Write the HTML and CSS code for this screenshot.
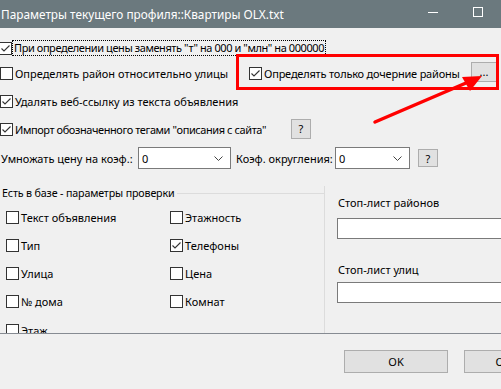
FILE: index.html
```html
<!DOCTYPE html>
<html lang="ru">
<head>
<meta charset="utf-8">
<title>Параметры текущего профиля</title>
<link rel="stylesheet" href="styles.css">
</head>
<body>
<div class="window">
  <div class="titlebar">
    <span class="title">Параметры текущего профиля::Квартиры OLX.txt</span>
    <span class="ctl-min"></span>
    <span class="ctl-max"></span>
  </div>
  <div class="panel">
    <div class="row row1">
      <span class="cb cb-edge checked"><svg viewBox="0 0 11 11"><polyline points="1.5,5.5 4,8 9.5,2.5"/></svg></span>
      <span class="lbl focus tight">При определении цены заменять "т" на 000 и "млн" на 000000</span>
    </div>
    <div class="row row2">
      <div class="cell cell-a">
        <span class="cb"></span>
        <span class="lbl">Определять район относительно улицы</span>
      </div>
      <div class="cell cell-b">
        <span class="cb checked"><svg viewBox="0 0 11 11"><polyline points="1.5,5.5 4,8 9.5,2.5"/></svg></span>
        <span class="lbl semi">Определять только дочерние районы</span>
      </div>
      <span class="btn btn-dots">...</span>
    </div>
    <div class="row row3">
      <span class="cb checked"><svg viewBox="0 0 11 11"><polyline points="1.5,5.5 4,8 9.5,2.5"/></svg></span>
      <span class="lbl">Удалять веб-ссылку из текста объявления</span>
    </div>
    <div class="row row4">
      <div class="cell cell-imp">
        <span class="cb checked"><svg viewBox="0 0 11 11"><polyline points="1.5,5.5 4,8 9.5,2.5"/></svg></span>
        <span class="lbl tight">Импорт обозначенного тегами "описания с сайта"</span>
      </div>
      <span class="btn btn-q">?</span>
    </div>
    <div class="row row5">
      <span class="cell cell-mult">Умножать цену на коэф.:</span>
      <span class="combo combo1"><span>0</span><svg viewBox="0 0 9 5"><polyline points="0.5,0.5 4.5,4.5 8.5,0.5"/></svg></span>
      <span class="cell cell-round">Коэф. округления:</span>
      <span class="combo combo2"><span>0</span><svg viewBox="0 0 9 5"><polyline points="0.5,0.5 4.5,4.5 8.5,0.5"/></svg></span>
      <span class="btn btn-q2">?</span>
    </div>
    <div class="lower">
      <div class="group">
        <div class="group-head"><span class="group-title">Есть в базе - параметры проверки</span><span class="group-line"></span></div>
        <div class="grid">
          <div class="item"><span class="cb"></span><span class="lbl">Текст объявления</span></div>
          <div class="item"><span class="cb"></span><span class="lbl">Этажность</span></div>
          <div class="item"><span class="cb"></span><span class="lbl">Тип</span></div>
          <div class="item"><span class="cb checked"><svg viewBox="0 0 11 11"><polyline points="1.5,5.5 4,8 9.5,2.5"/></svg></span><span class="lbl">Телефоны</span></div>
          <div class="item"><span class="cb"></span><span class="lbl">Улица</span></div>
          <div class="item"><span class="cb"></span><span class="lbl">Цена</span></div>
          <div class="item"><span class="cb"></span><span class="lbl">№ дома</span></div>
          <div class="item"><span class="cb"></span><span class="lbl">Комнат</span></div>
          <div class="item"><span class="cb"></span><span class="lbl">Этаж</span></div>
        </div>
      </div>
      <div class="side">
        <div class="side-lbl">Стоп-лист районов</div>
        <div class="input input1"></div>
        <div class="side-lbl second">Стоп-лист улиц</div>
        <div class="input input2"></div>
      </div>
    </div>
  </div>
  <div class="footer">
    <span class="btn btn-big">OK</span>
    <span class="btn btn-big btn-cancel">Отмена</span>
  </div>
  <div class="redbox"></div>
  <svg class="arrow" viewBox="0 0 501 389" width="501" height="389">
    <line x1="375" y1="122" x2="466" y2="83"/>
    <polygon points="482,76 462,77 470,91"/>
  </svg>
</div>
</body>
</html>
```
FILE: styles.css
```css
* { box-sizing: border-box; }
html, body { margin: 0; padding: 0; }
body {
  width: 501px;
  height: 389px;
  overflow: hidden;
  background: #f0f0f0;
  font-family: "Noto Sans", "Liberation Sans", sans-serif;
  font-size: 11px;
  color: #000;
}
.window {
  position: relative;
  width: 501px;
  height: 389px;
  overflow: hidden;
  background: #f0f0f0;
}
.titlebar {
  height: 28px;
  background: #6b797e;
  color: #fff;
  display: flex;
  align-items: center;
  padding-left: 1px;
}
.title { flex: 1; font-size: 11.8px; white-space: nowrap; padding-bottom: 1px; }
.ctl-min {
  width: 10px; height: 1px; background: #fff;
  margin-right: 35px; margin-top: -4px;
}
.ctl-max {
  width: 10px; height: 10px; border: 1px solid #fff;
  margin-right: 18px; margin-top: -4px;
}
.panel {
  height: 305px;
  overflow: hidden;
}
.row {
  display: flex;
  align-items: center;
  white-space: nowrap;
}
.row1 { height: 26px; margin-top: 7px; }
.row2 { height: 26px; margin-top: -1px; }
.row3 { height: 28px; margin-top: 1px; }
.row4 { height: 28px; }
.row5 { height: 30px; }
.cell { display: flex; align-items: center; white-space: nowrap; flex: 0 0 auto; }
.cell-a { width: 249px; }
.cell-b { width: 222px; }
.cell-imp { width: 291px; }
.cell-mult { width: 138px; padding-left: 1px; }
.cell-round { width: 99px; padding-left: 0; }
.cb {
  flex: 0 0 13px;
  width: 13px; height: 13px;
  border: 1px solid #333;
  background: #fff;
  display: flex;
  align-items: center;
  justify-content: center;
}
.cb svg { width: 11px; height: 11px; }
.cb polyline { fill: none; stroke: #333; stroke-width: 1.1; }
.cb-edge { margin-left: -1px; }
.lbl { margin-left: 2px; }
.tight { letter-spacing: -0.42px; }
.semi { letter-spacing: -0.2px; }
.focus {
  outline: 1px dotted #000;
  outline-offset: 0;
  padding: 0 1px;
  margin-left: 1px;
  line-height: 14px;
}
.btn {
  display: flex;
  align-items: center;
  justify-content: center;
  background: #e1e1e1;
  border: 1px solid #adadad;
  flex: 0 0 auto;
}
.btn-dots {
  width: 26px; height: 20px;
  margin-top: -3px;
  align-items: flex-end;
  padding-bottom: 4px;
  line-height: 10px;
}
.btn-q { width: 20px; height: 20px; margin-top: -1px; }
.btn-q2 { width: 20px; height: 18px; margin-left: 8px; }
.combo {
  display: flex;
  align-items: center;
  justify-content: space-between;
  height: 22px;
  background: #fff;
  border: 1px solid #7a7a7a;
  padding: 0 7px 0 3px;
  flex: 0 0 auto;
}
.combo svg { width: 9px; height: 5px; }
.combo polyline { fill: none; stroke: #444; stroke-width: 1; }
.combo1 { width: 93px; margin-right: 5px; }
.combo2 { width: 75px; }
.lower {
  display: flex;
  margin-top: 13px;
}
.group {
  border-right: 1px solid #dcdcdc;
  height: 200px;
  flex: 0 0 325px;
}
.group-head {
  display: flex;
  align-items: center;
  height: 14px;
}
.group-title { margin-left: 2px; margin-right: 3px; white-space: nowrap; font-size: 10.7px; letter-spacing: -0.15px; }
.group-line { flex: 1; height: 1px; background: #dcdcdc; }
.grid {
  display: grid;
  grid-template-columns: 164px 1fr;
  grid-auto-rows: 28.25px;
  padding-left: 6px;
  padding-top: 3px;
}
.item { display: flex; align-items: center; white-space: nowrap; }
.side {
  padding-left: 12px;
  flex: 1;
  margin-right: -20px;
}
.side-lbl { height: 14px; line-height: 14px; margin-left: 1px; margin-top: 10px; }
.side-lbl.second { margin-top: 24px; }
.input {
  height: 21px;
  background: #fff;
  border: 1px solid #7a7a7a;
}
.input1 { margin-top: 8px; }
.input2 { margin-top: 5px; }
.footer {
  border-top: 1px solid #868b92;
  height: 56px;
  display: flex;
  padding-left: 344px;
  padding-top: 16px;
  gap: 16px;
}
.btn-big { flex: 0 0 104px; width: 104px; height: 23px; }
.redbox {
  position: absolute;
  left: 236px;
  top: 54px;
  width: 263px;
  height: 36px;
  border: 3px solid #ff0000;
}
.arrow { position: absolute; left: 0; top: 0; }
.arrow line { stroke: #ff0000; stroke-width: 3.5; stroke-linecap: round; }
.arrow polygon { fill: #ff0000; }
```
